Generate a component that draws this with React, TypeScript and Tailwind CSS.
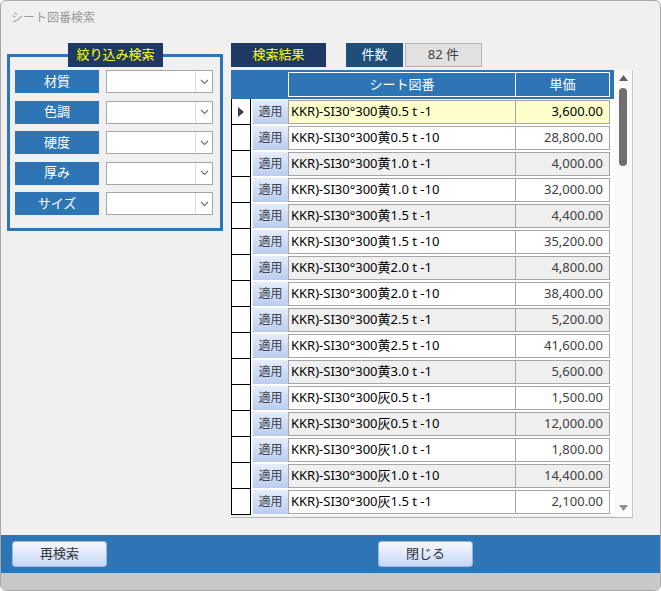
import React from 'react'

const rows: [string, string][] = [
  ['KKR)-SI30°300黄0.5 t -1', '3,600.00'],
  ['KKR)-SI30°300黄0.5 t -10', '28,800.00'],
  ['KKR)-SI30°300黄1.0 t -1', '4,000.00'],
  ['KKR)-SI30°300黄1.0 t -10', '32,000.00'],
  ['KKR)-SI30°300黄1.5 t -1', '4,400.00'],
  ['KKR)-SI30°300黄1.5 t -10', '35,200.00'],
  ['KKR)-SI30°300黄2.0 t -1', '4,800.00'],
  ['KKR)-SI30°300黄2.0 t -10', '38,400.00'],
  ['KKR)-SI30°300黄2.5 t -1', '5,200.00'],
  ['KKR)-SI30°300黄2.5 t -10', '41,600.00'],
  ['KKR)-SI30°300黄3.0 t -1', '5,600.00'],
  ['KKR)-SI30°300灰0.5 t -1', '1,500.00'],
  ['KKR)-SI30°300灰0.5 t -10', '12,000.00'],
  ['KKR)-SI30°300灰1.0 t -1', '1,800.00'],
  ['KKR)-SI30°300灰1.0 t -10', '14,400.00'],
  ['KKR)-SI30°300灰1.5 t -1', '2,100.00'],
]

const filters = ['材質', '色調', '硬度', '厚み', 'サイズ']

function Combo() {
  return (
    <div className="flex w-[107px] h-[23px] bg-white border border-[#a6a6a6]">
      <div className="flex-1" />
      <div className="w-[17px] border-l border-[#dcdcdc] flex items-center justify-center">
        <svg width="9" height="6" viewBox="0 0 9 6">
          <path d="M1 1 L4.5 4.5 L8 1" fill="none" stroke="#707070" strokeWidth="1.1" />
        </svg>
      </div>
    </div>
  )
}

export default function App() {
  return (
    <div
      className="w-[661px] h-[591px] flex flex-col bg-[#f0f0f0] border border-[#a9a9a9] rounded-[6px] overflow-hidden"
      style={{ fontFamily: '"Noto Sans", "Noto Sans CJK JP", sans-serif' }}
    >
      {/* title */}
      <div className="h-[34px] pl-[10px] pt-[8px] text-[12px] text-[#9a9a9a]">シート図番検索</div>

      <div className="flex-1 flex pl-[6px] pt-[8px]">
        {/* filter group */}
        <div className="relative w-[216px] pt-[11px]">
          <div className="absolute left-[61px] top-0 w-[95px] h-[24px] bg-[#1f3864] text-[#ffff00] text-[13px] flex items-center justify-center">
            絞り込み検索
          </div>
          <div className="h-[177px] border-[3px] border-[#2e75b6] pl-[5px] pt-[13px] flex flex-col gap-[7.5px]">
            {filters.map((f) => (
              <div key={f} className="flex gap-[7px]">
                <div className="w-[84px] h-[23px] bg-[#2e75b6] text-white text-[13px] flex items-center justify-center">
                  {f}
                </div>
                <Combo />
              </div>
            ))}
          </div>
        </div>

        {/* results */}
        <div className="ml-[8px] w-[402px]">
          <div className="flex h-[24px] text-[13px]">
            <div className="w-[95px] bg-[#1f3864] text-[#ffff00] flex items-center justify-center">検索結果</div>
            <div className="ml-[20px] w-[57px] bg-[#1f4e79] text-white flex items-center justify-center">件数</div>
            <div className="ml-[2px] w-[77px] bg-[#e1e1e1] border border-[#b4b4b4] text-[#404040] flex items-center justify-center">
              82 件
            </div>
          </div>

          <div className="mt-[3px] h-[448px] flex border-b border-[#b4b4b4]">
            <div className="w-[383px] flex flex-col">
              <div className="h-[29px] bg-[#2e75b6] flex items-center pl-[57px] text-white text-[13px]">
                <div className="w-[228px] h-[25px] border border-white flex items-center justify-center">シート図番</div>
                <div className="w-[94px] h-[25px] border border-l-0 border-white flex items-center justify-center">単価</div>
              </div>
              {rows.map(([name, price], i) => {
                const bg = i === 0 ? 'bg-[#ffffcc]' : i % 2 === 1 ? 'bg-white' : 'bg-[#efefef]'
                return (
                  <div key={i} className="h-[26px] flex bg-white">
                    <div className="w-[20px] border-l border-b border-r border-black flex items-center justify-center">
                      {i === 0 && (
                        <svg width="6" height="10" viewBox="0 0 6 10">
                          <path d="M0 0 L6 5 L0 10 Z" fill="#404040" />
                        </svg>
                      )}
                    </div>
                    <div className="w-[37px] p-[1px] pr-0">
                      <div className="h-full bg-gradient-to-b from-[#e6edf9] to-[#b9ccef] border-l border-[#eef3fb] text-[12px] text-[#3c4450] flex items-center justify-center">
                        適用
                      </div>
                    </div>
                    <div className={`w-[228px] my-[1px] border border-[#a6a6a6] ${bg} text-[13px] text-black flex items-center pl-[2px] whitespace-nowrap`}>
                      {name}
                    </div>
                    <div className={`w-[94px] my-[1px] border border-l-0 border-[#a6a6a6] ${bg} text-[13px] ${i === 0 ? 'text-black' : 'text-[#404040]'} flex items-center justify-end pr-[6px]`}>
                      {price}
                    </div>
                  </div>
                )
              })}
            </div>
            {/* scrollbar */}
            <div className="w-[19px] bg-[#fafafa] border-r border-[#c8c8c8] flex flex-col items-center pt-[4px] pb-[4px]">
              <svg width="9" height="6" viewBox="0 0 9 6" className="mt-[1px]">
                <path d="M0 6 L4.5 0 L9 6 Z" fill="#606060" />
              </svg>
              <div className="mt-[7px] w-[8px] h-[78px] rounded-full bg-[#6e6e6e]" />
              <div className="flex-1" />
              <svg width="9" height="6" viewBox="0 0 9 6" className="mb-[2px]">
                <path d="M0 0 L4.5 6 L9 0 Z" fill="#909090" />
              </svg>
            </div>
          </div>
        </div>
      </div>

      {/* bottom bar */}
      <div className="h-[38px] bg-[#2e75b6] flex items-center pl-[11px]">
        <button className="w-[95px] h-[26px] rounded-[3px] border border-[#9db4e0] bg-gradient-to-b from-[#f6f8fe] to-[#c7d7f6] text-[13px] text-[#333]">
          再検索
        </button>
        <button className="ml-[271px] w-[95px] h-[26px] rounded-[3px] border border-[#9db4e0] bg-gradient-to-b from-[#f6f8fe] to-[#c7d7f6] text-[13px] text-[#333]">
          閉じる
        </button>
      </div>
      <div className="h-[17px] bg-[#c8c8c8]" />
    </div>
  )
}
